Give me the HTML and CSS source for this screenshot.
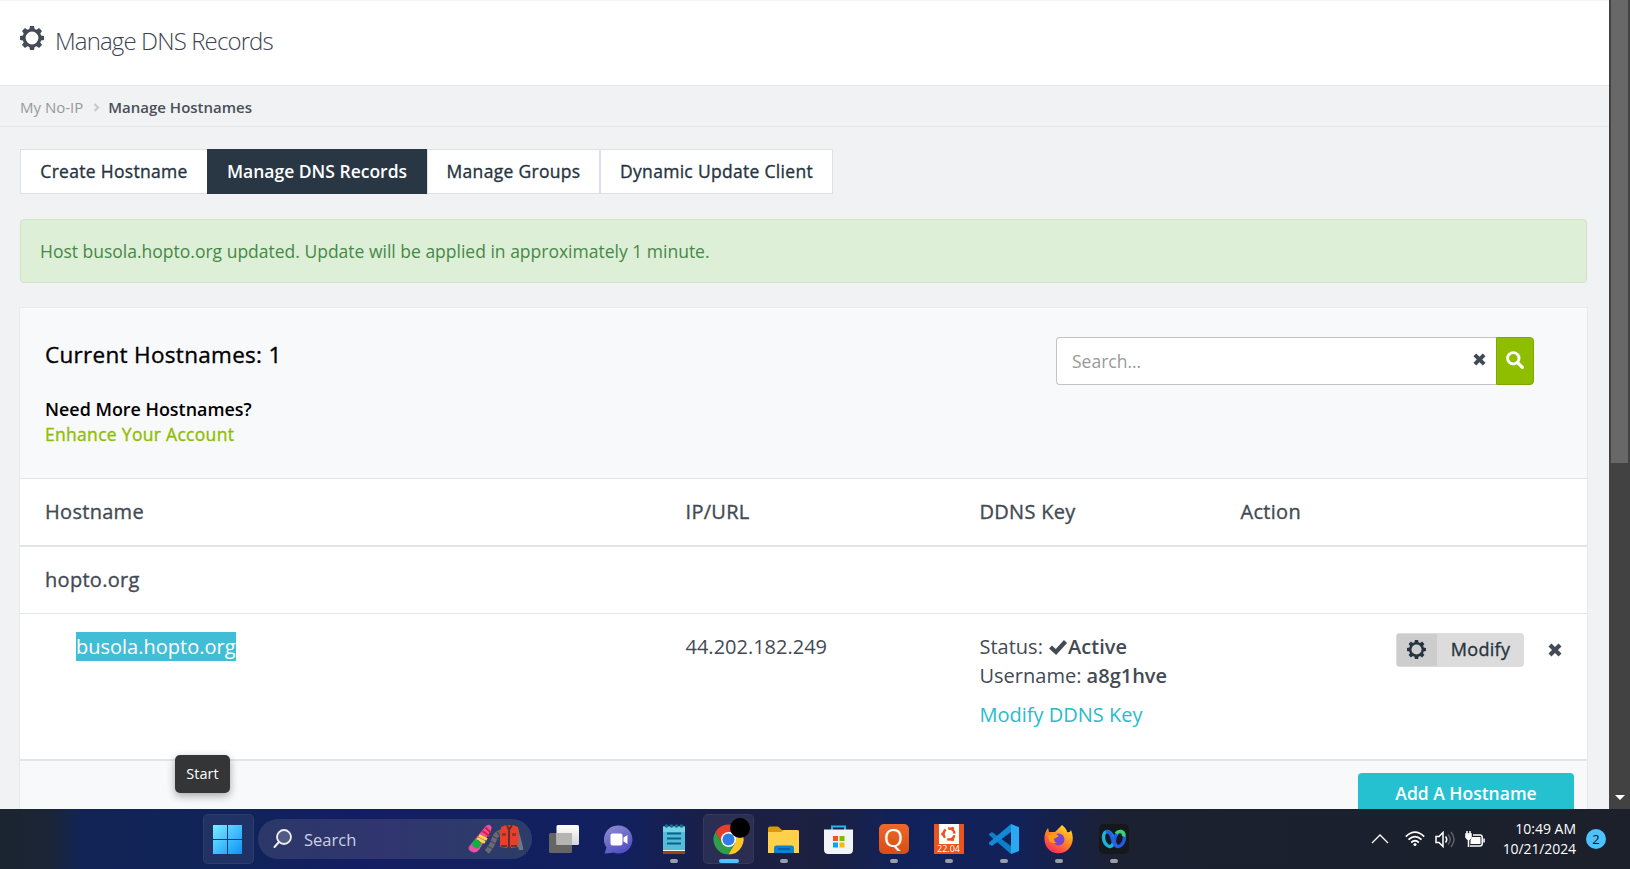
FILE: index.html
```html
<!DOCTYPE html>
<html lang="en">
<head>
<meta charset="utf-8">
<title>Manage DNS Records</title>
<link rel="stylesheet" href="styles.css">
</head>
<body>
<svg class="defs" width="0" height="0">
  <symbol id="gear" viewBox="0 0 24 24">
    <path fill="currentColor" fill-rule="evenodd" d="M10 0h4l.6 2.900 2 .8L19 2l3 3-1.700 2.400.8 2 2.900.6v4l-2.900.6-.8 2L22 19l-3 3-2.400-1.700-2 .8L14 24h-4l-.6-2.900-2-.8L5 22l-3-3 1.700-2.400-.8-2L0 14v-4l2.900-.6.8-2L2 5l3-3 2.400 1.700 2-.8zM12 5.600a6.400 6.400 0 1 0 0 12.800a6.400 6.400 0 1 0 0-12.800z"/>
  </symbol>
  <symbol id="cross" viewBox="0 0 12 12">
    <path d="M1.700 1.700l8.600 8.600M10.300 1.700l-8.600 8.600" stroke="currentColor" stroke-width="3.600"/>
  </symbol>
</svg>
<div class="viewport">
  <div class="page">
    <header class="title-bar">
      <svg class="title-gear"><use href="#gear"/></svg>
      <h1>Manage DNS Records</h1>
    </header>
    <nav class="crumbs">
      <a>My No-IP</a>
      <svg width="7" height="9" viewBox="0 0 7 9"><path d="M1.500 1l3.500 3.500L1.500 8" fill="none" stroke="#c8cbce" stroke-width="2.200"/></svg>
      <strong>Manage Hostnames</strong>
    </nav>
    <main class="content">
      <div class="tabs">
        <a class="tab medium tab-create">Create Hostname</a>
        <a class="tab tab-active">Manage DNS Records</a>
        <a class="tab medium tab-groups">Manage Groups</a>
        <a class="tab medium tab-client">Dynamic Update Client</a>
      </div>
      <div class="alert">Host busola.hopto.org updated. Update will be applied in approximately 1 minute.</div>
      <section class="panel">
        <div class="panel-head">
          <div>
            <h2 class="medium">Current Hostnames: 1</h2>
            <p class="need">Need More Hostnames?</p>
            <a class="enhance medium">Enhance Your Account</a>
          </div>
          <div class="search">
            <div class="search-field"><span>Search...</span><svg width="13" height="13"><use href="#cross"/></svg></div>
            <button class="search-btn"><svg width="18" height="18" viewBox="0 0 18 18" fill="none" stroke="#fff"><circle cx="7.300" cy="7.300" r="5.700" stroke-width="2.900"/><path d="M11.800 11.800l4.600 4.600" stroke-width="3.200" stroke-linecap="round"/></svg></button>
          </div>
        </div>
        <div class="row row-head medium"><span>Hostname</span><span>IP/URL</span><span>DDNS Key</span><span>Action</span></div>
        <div class="row row-domain medium"><span>hopto.org</span></div>
        <div class="row row-host">
          <div class="host"><mark>busola.hopto.org</mark></div>
          <div>44.202.182.249</div>
          <div>
            <div>Status: <svg class="check" width="20" height="16" viewBox="0 0 20 16"><path d="M2.500 8l5.500 5L17.500 2.500" fill="none" stroke="currentColor" stroke-width="4.200"/></svg><b>Active</b></div>
            <div>Username: <b>a8g1hve</b></div>
            <a class="ddns-link">Modify DDNS Key</a>
          </div>
          <div class="actions">
            <button class="modify"><span class="modify-icon"><svg width="19" height="19"><use href="#gear"/></svg></span><span class="modify-text medium">Modify</span></button>
            <svg class="remove" width="14" height="14"><use href="#cross"/></svg>
          </div>
        </div>
        <div class="panel-foot"><button class="add">Add A Hostname</button></div>
      </section>
    </main>
  </div>
  <div class="scrollbar"><div class="thumb"></div><i class="arrow"></i></div>
</div>
<div class="tooltip">Start</div>
<footer class="taskbar">
  <div class="dock">
    <div class="slot slot-lit slot-start"><svg width="29" height="29" viewBox="0 0 29 29"><defs><linearGradient id="win" gradientUnits="userSpaceOnUse" x1="0" y1="0" x2="29" y2="29"><stop stop-color="#7cecff"/><stop offset="1" stop-color="#0a93fa"/></linearGradient></defs><path fill="url(#win)" d="M0 0h14v14H0zM15 0h14v14H15zM0 15h14v14H0zM15 15h14v14H15z"/></svg></div>
    <div class="task-search">
      <svg width="19" height="20" viewBox="0 0 19 20"><circle cx="11" cy="8" r="7" fill="#ffffff2e" stroke="#eee" stroke-width="1.800"/><path d="M6 13l-4.500 5" stroke="#eee" stroke-width="2" stroke-linecap="round"/></svg>
      <span>Search</span>
      <svg class="gear-art" width="56" height="30" viewBox="0 0 56 30">
        <path d="M1.500 22L17 3q3-3.500 5.500-1.500T22 8L11 26q-2.500 4-8 1.500Q-1 25 1.500 22z" fill="#ed4da6"/><path d="M14.500 7l7 5M17.500 3.500l5 5" stroke="#d5242f" stroke-width="2"/><path d="M9 14.500l8 4M11 11.500l8 4" stroke="#f7dc3d" stroke-width="3"/><circle cx="8.500" cy="20" r="4.400" fill="#13ae45"/>
        <path d="M34 8Q27 10 26 16q-2 6-7 12" fill="none" stroke="#686877" stroke-width="5.500"/><path d="M29 8l4 5M24 12l6 3M22 17l6 3M19 22l6 3" stroke="#454554" stroke-width="1.300"/>
        <path d="M50 4l5 19v3h-4l-5-17z" fill="#727788"/>
        <path d="M33 3l5-2h7l5 2 1 9-1 11-7 1-2-4-2 4-7-1V12z" fill="#e5412a"/><path d="M39 1l2 5v19M44 1l-3 5" stroke="#662b31" stroke-width="2" fill="none"/><path d="M34 9h4v3h-4zM44 9h4v3h-4z" fill="#99332d"/><path d="M33 22h6M43 22h6" stroke="#5b3941" stroke-width="2"/>
      </svg>
    </div>
    <div class="slot slot-first"><svg width="30" height="28" viewBox="0 0 30 28"><defs><linearGradient id="tv" x1="0" y1="0" x2="0" y2="1"><stop stop-color="#fff"/><stop offset="1" stop-color="#d5d5d7"/></linearGradient></defs><rect y="8" width="23" height="20" rx="1.500" fill="#656565"/><rect x="7.500" width="22.500" height="20" rx="1.500" fill="url(#tv)"/><path d="M7.500 8H23v12H7.500z" fill="#b4b4b4"/></svg></div>
    <div class="slot"><svg width="29" height="29" viewBox="0 0 29 29"><defs><linearGradient id="chat" x1="0" y1="0" x2=".5" y2="1"><stop stop-color="#8f8fd0"/><stop offset="1" stop-color="#5352c5"/></linearGradient></defs><path d="M14.500.5a14 14 0 1 1-5 27.100Q5 28.500.5 28.500l2-6A14 14 0 0 1 14.500.5z" fill="url(#chat)"/><rect x="6.500" y="8.500" width="12" height="12" rx="2" fill="#fff"/><path d="M19.500 12.500l4-2.500v9l-4-2.500z" fill="#fff"/></svg></div>
    <div class="slot"><svg width="22" height="30" viewBox="0 0 22 30"><path d="M0 25h22v5H0z" fill="#914712"/><path d="M0 25h22v2H0z" fill="#eee"/><path d="M0 2.500h22V26H0z" fill="#54bdda"/><path d="M0 2.500h22V8H0z" fill="#76d3e7"/><path d="M4 9.500h14M4 14.500h14M4 19.500h14" stroke="#08628a" stroke-width="1.800"/><g fill="#126f94"><circle cx="3.500" cy="2" r="1.800"/><circle cx="8.500" cy="2" r="1.800"/><circle cx="13.500" cy="2" r="1.800"/><circle cx="18.500" cy="2" r="1.800"/></g></svg><i class="dot"></i></div>
    <div class="slot slot-lit"><svg class="chrome" width="37" height="37" viewBox="0 0 37 37"><g transform="translate(15.500 21.500)"><path d="M-13-7.500A15 15 0 0 1 13-7.500L0-7-6.500 3.800z" fill="#e5402f"/><path d="M-13-7.500A15 15 0 0 0 0 15L6.500 3.800H-6.500z" fill="#2d9e4a"/><path d="M0 15A15 15 0 0 0 13-7.500H0L6.500 3.800z" fill="#fcc629"/><circle r="7.500" fill="#fff"/><circle r="6" fill="#2c7de9"/></g><circle cx="27" cy="10" r="10" fill="#000"/></svg><i class="dot dot-active"></i></div>
    <div class="slot"><svg width="31" height="27" viewBox="0 0 31 27"><path d="M0 8V2.500Q0 .5 2 .5h8l4 3.500H29q2 0 2 2v3z" fill="#d99b0b"/><path d="M0 6h13l3-2h13q2 0 2 2v21H0z" fill="#ffd04a"/><path d="M6 27v-5q0-2.500 2.500-2.500h15q2.500 0 2.500 2.500v5z" fill="#1180d2"/><path d="M10 23h12" stroke="#075a9e" stroke-width="1.500"/></svg><i class="dot"></i></div>
    <div class="slot"><svg width="29" height="29" viewBox="0 0 29 29"><path d="M8 7V1.500h13V7" fill="none" stroke="#28b4e8" stroke-width="2"/><path d="M0 4.500h29v20q0 4.500-4.500 4.500h-20Q0 29 0 24.500z" fill="#f2f4f7"/><path d="M9 11h5v5H9z" fill="#f35325"/><path d="M15.500 11h5v5h-5z" fill="#7fb900"/><path d="M9 17.500h5v5H9z" fill="#06a5ef"/><path d="M15.500 17.500h5v5h-5z" fill="#fdb800"/></svg></div>
    <div class="slot"><div class="q-icon">Q</div><i class="dot"></i></div>
    <div class="slot"><div class="ubuntu"><svg width="20" height="20" viewBox="0 0 20 20"><path d="M0 0h20v20H0z" fill="#fff"/><circle cx="10" cy="10" r="5.500" fill="none" stroke="#e95420" stroke-width="2.500" stroke-dasharray="9 2.520" stroke-dashoffset="-1.300"/><g fill="#e95420"><circle cx="3.800" cy="10" r="1.700"/><circle cx="13.500" cy="4.500" r="1.700"/><circle cx="13.500" cy="15.500" r="1.700"/></g></svg><span>22.04</span></div><i class="dot"></i></div>
    <div class="slot"><svg width="30" height="30" viewBox="0 0 30 30"><path d="M22 0l8 3v24l-8 3z" fill="#2ba8f2"/><path d="M0 10l3-2 19 14v8L0 11z" fill="#0c7fc9"/><path d="M0 20l3 2L22 8V0L0 18.500z" fill="#1289d4"/></svg><i class="dot"></i></div>
    <div class="slot"><svg width="29" height="29" viewBox="0 0 29 29"><defs><linearGradient id="fox" x1=".8" y1="0" x2=".2" y2="1"><stop stop-color="#ffe22e"/><stop offset=".45" stop-color="#ff8a20"/><stop offset="1" stop-color="#f62265"/></linearGradient></defs><path d="M18 0q5 4 5 7 3 1 4-2 3 7 1 13A14 14 0 0 1 .5 15Q0 8 4 3l1 4 6 0z" fill="url(#fox)"/><circle cx="14.500" cy="14.500" r="6" fill="#7b43d4"/><path d="M4 11q4-3 8-2l3 2-5 3q0 3 3 4-6 1-8-3z" fill="#ff9a1d"/></svg><i class="dot"></i></div>
    <div class="slot"><svg width="30" height="30" viewBox="0 0 30 30" fill="none" stroke-width="3.400"><rect width="30" height="30" rx="5" fill="#15191b"/><ellipse cx="9.500" cy="15" rx="4.800" ry="7.600" transform="rotate(-16 9.500 15)" stroke="#19b4d8"/><ellipse cx="20.500" cy="15" rx="4.800" ry="7.600" transform="rotate(16 20.500 15)" stroke="#2459e8"/><path d="M17 9.500q2-2.600 5-2 3.500 1 2.500 5" stroke="#38d56a"/><path d="M7 7.600q4-1 6 6 2 8.500 6 8.800" stroke="#2361ed"/></svg><i class="dot"></i></div>
  </div>
  <div class="tray">
    <svg width="18" height="10" viewBox="0 0 18 10"><path d="M1 9l8-8 8 8" fill="none" stroke="#fff" stroke-width="1.300"/></svg>
    <svg class="wifi" width="20" height="16" viewBox="0 0 20 16" fill="none" stroke="#fff" stroke-width="1.700"><path d="M.8 5.700q9.200-9 18.400 0M3.500 8.700q6.500-6.300 13 0M6.200 11.500q3.800-3.500 7.600 0"/><circle cx="10" cy="13.500" r="1.500" fill="#fff" stroke="none"/></svg>
    <svg class="speaker" width="20" height="17" viewBox="0 0 20 17" fill="none" stroke="#fff" stroke-width="1.500"><path d="M1 5.500h3l4-4v14l-4-4H1z"/><path d="M10.500 5.500q2.500 3 0 6"/><path d="M13 3.500q4.500 5 0 10M16 1q6 7.500 0 15" stroke="#5d6169"/></svg>
    <svg class="battery" width="20" height="17" viewBox="0 0 20 17" fill="none" stroke="#fff" stroke-width="1.500"><path d="M8 4h7q2.200 0 2.200 2.200v6.600Q17.200 15 15 15H5"/><path d="M7 6h8.500v7H5.500V9z" fill="#fff" stroke="none"/><path d="M1 3h5v3.500L4 8.500H3L1 6.500zM2 0v3M5 0v3M3.500 8v8M19 7.500v4" fill="#fff"/></svg>
    <div class="clock"><div class="time">10:49 AM</div><div class="date">10/21/2024</div></div>
    <div class="badge">2</div>
  </div>
</footer>
</body>
</html>
```
FILE: styles.css
```css
* { box-sizing: border-box; }
body {
  margin: 0;
  height: 869px;
  overflow: hidden;
  display: flex;
  flex-direction: column;
  background: #f0f2f4;
  color: #444a53;
  font: 17.5px/25px "Open Sans", "Noto Sans", sans-serif;
}
h1, h2, p { margin: 0; }
button { border: 0; padding: 0; font: inherit; color: inherit; }
svg { display: block; flex: none; }
.defs { position: absolute; }
.medium { font-weight: 400; letter-spacing: .3px; -webkit-text-stroke: .35px currentColor; }
.viewport { height: 809px; display: flex; overflow: hidden; }
.page { flex: 1; min-width: 0; }

.title-bar {
  height: 86px;
  display: flex;
  padding-left: 20px;
  background: #fff;
  border-top: 1px solid #f5f6f7;
  border-bottom: 1px solid #e4e7ea;
}
.title-gear { width: 24px; height: 24px; margin-top: 25px; color: #444a56; }
h1 { margin: 22px 0 0 11px; font-size: 24px; line-height: 36px; font-weight: 300; letter-spacing: -.87px; color: #3d4450; }
.crumbs {
  height: 41px;
  display: flex;
  align-items: center;
  padding: 2px 0 0 20px;
  border-bottom: 1px solid #e4e6e9;
  font-size: 15px;
}
.crumbs a { color: #999; }
.crumbs svg { margin: 0 8px 0 10px; }
.crumbs strong { font-weight: 600; color: #4a4f57; }

.content { padding: 22px 22px 0 20px; }
.tabs { display: flex; height: 45px; }
.tab {
  border: 1px solid #dde1e6;
  background: #fff;
  color: #273440;
  line-height: 43px;
  text-align: center;
  white-space: nowrap;
}
.tab-create { width: 187px; border-right: 0; }
.tab-active { width: 220px; background: #293644; border-color: #293644; color: #fff; font-weight: 600; }
.tab-groups { width: 173px; }
.tab-client { width: 233px; }
.alert {
  height: 64px;
  margin-top: 25px;
  padding-left: 19px;
  border: 1px solid #cfe5c0;
  border-radius: 4px;
  background: #deefd8;
  color: #468847;
  line-height: 63px;
}
.panel { margin-top: 24px; border-top: 1px solid #e9ebed; box-shadow: -1px 0 #e7e9eb, 1px 0 #e7e9eb; background: #fff; }
.panel-head {
  height: 171px;
  display: flex;
  justify-content: space-between;
  padding: 29px 53px 0 25px;
  background: #f8f9fb;
  border-bottom: 1px solid #e3e4e6;
  color: #000;
}
h2 { font-size: 22.500px; line-height: 36px; }
.need { margin-top: 24px; font-weight: 600; font-size: 17.900px; }
.enhance { color: #8fbe00; }
.search { display: flex; width: 478px; height: 48px; }
.search-field {
  flex: 1;
  display: flex;
  justify-content: space-between;
  padding: 11px 10px 0 15px;
  background: #fff;
  border: 1px solid #c3c3c3;
  border-right: 0;
  border-radius: 4px 0 0 4px;
  color: #999;
}
.search-field svg { margin-top: 4px; color: #414a55; }
.search-btn { width: 38px; background: #8fbe00; border: 1px solid #7fa900; border-radius: 0 4px 4px 0; }
.search-btn svg { margin: 0 auto 2px; }

.row { display: grid; grid-template-columns: 640.500px 294px 261px 1fr; padding-left: 25px; font-size: 20px; line-height: 29px; }
.row-head { height: 68px; padding-top: 18px; border-bottom: 2px solid #e3e4e6; }
.row-domain { height: 67px; padding-top: 18px; border-bottom: 1px solid #e3e4e6; }
.row-host { height: 147px; padding-top: 18px; border-bottom: 2px solid #e3e4e6; }
.row b { font-weight: 600; }
.host { padding-left: 31px; }
.host mark { padding: 1px 0; background: #42bdd6; color: #fff; }
.check { display: inline-block; vertical-align: -1px; }
.ddns-link { display: block; margin-top: 10px; color: #28bbcc; }
.actions { display: flex; justify-content: flex-end; padding: 1px 25px 0 0; }
.modify { display: flex; width: 128px; height: 34px; padding: 1px; background: #dcdcdc; border-radius: 4px; color: #273440; font-size: 18px; }
.modify-icon { width: 40px; height: 32px; padding: 6px 0 0 10px; background: #cdcdcd; }
.modify-text { flex: 1; line-height: 30px; padding-left: 1px; }
.remove { margin: 10px 0 0 24px; color: #414a55; }
.panel-foot { height: 80px; padding: 12px 13px 0 0; background: #f8f9fb; }
.add { display: block; width: 216px; height: 52px; margin-left: auto; padding-bottom: 11px; background: #25c1d1; border-radius: 4px; color: #fff; font-weight: 600; }

.scrollbar { display: flex; flex-direction: column; align-items: center; width: 21px; background: #424242; }
.thumb { width: 17px; height: 463px; background: #686868; }
.arrow { margin-top: auto; margin-bottom: 9px; border: 5px solid transparent; border-top-color: #fff; border-bottom: 0; }

.tooltip {
  position: absolute;
  left: 175px;
  top: 755px;
  width: 55px;
  height: 38px;
  border-radius: 5px;
  background: #343536;
  box-shadow: 0 3px 8px #0005;
  color: #fff;
  font-size: 14.500px;
  line-height: 37px;
  text-align: center;
}
.taskbar {
  height: 60px;
  display: flex;
  justify-content: space-between;
  background: linear-gradient(90deg, #1b242f 0, #1b2536 50px, #122455 80px, #10235a 250px, #141d62 350px, #141f60 420px, #11205f 620px, #1b1f45 720px, #1c2040 820px, #11225a 900px, #122158 1020px, #1c2131 1120px, #1b202b 100%);
  color: #fff;
}
.dock { display: flex; padding: 5px 0 0 203px; }
.slot { position: relative; display: flex; align-items: center; justify-content: center; width: 51px; height: 50px; margin-right: 4px; }
.slot-lit { background: #ffffff12; border: 1px solid #ffffff0d; border-radius: 5px; }
.slot-start { padding-right: 2px; }
.slot-first { margin-left: 6px; }
.dot { position: absolute; left: 22px; top: 45px; width: 8px; height: 4px; border-radius: 2px; background: #999eaa; }
.dot-active { left: 15px; top: 44px; width: 20px; background: #4cc2ff; }
.chrome { margin: -6px 0 0 6px; }
.task-search { display: flex; align-items: center; width: 274px; height: 40px; margin-top: 5px; padding-left: 15px; border-radius: 20px; background: linear-gradient(90deg, #2b3869, #30356f 45%, #2b3d68); }
.task-search span { margin-left: 12px; color: #cdd1e0; font-size: 16.500px; }
.gear-art { margin: 0 8px 1px auto; }
.q-icon { width: 30px; height: 30px; border-radius: 5px; background: linear-gradient(#f0672b, #d74e13); font: 25px/27px "Open Sans", sans-serif; text-align: center; }
.ubuntu { width: 30px; height: 30px; background: #e95420; overflow: hidden; }
.ubuntu svg { margin: 0 auto; }
.ubuntu span { display: block; font-size: 9px; line-height: 10px; text-align: center; }
.tray { display: flex; align-items: center; padding-right: 24px; }
.wifi { margin-left: 16px; }
.speaker { margin-left: 10px; }
.battery { margin-left: 10px; }
.clock { width: 91px; font-size: 14px; line-height: 20px; text-align: right; }
.date { letter-spacing: -.1px; }
.badge { width: 20px; height: 20px; margin-left: 10px; border-radius: 50%; background: #4cc2ff; color: #111; font-size: 13px; line-height: 20px; text-align: center; }
```
